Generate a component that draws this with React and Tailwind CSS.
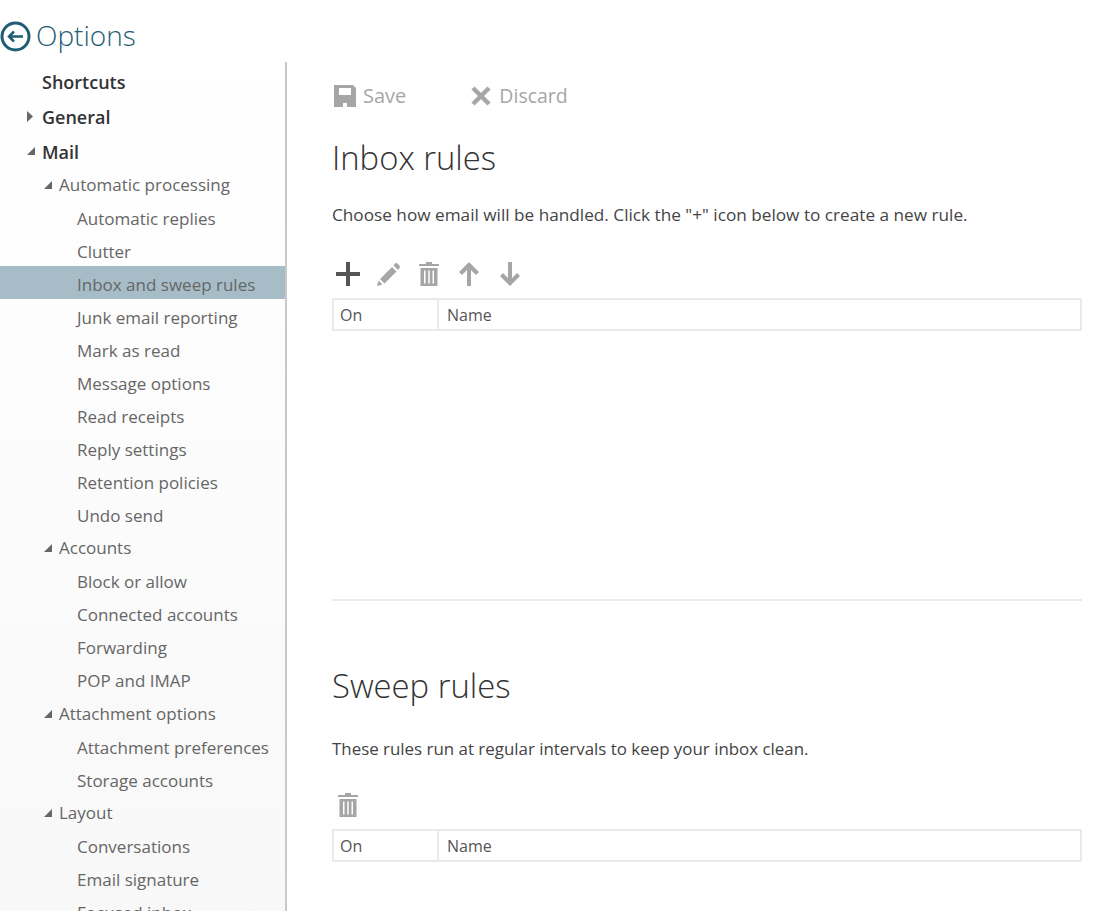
const font = { fontFamily: '"Open Sans", "Noto Sans", sans-serif' };

const menu = [
  { label: "Automatic processing", items: ["Automatic replies", "Clutter", "Inbox and sweep rules", "Junk email reporting", "Mark as read", "Message options", "Read receipts", "Reply settings", "Retention policies", "Undo send"] },
  { label: "Accounts", items: ["Block or allow", "Connected accounts", "Forwarding", "POP and IMAP"] },
  { label: "Attachment options", items: ["Attachment preferences", "Storage accounts"] },
  { label: "Layout", items: ["Conversations", "Email signature", "Focused inbox"] },
];

function Down() {
  return <svg width="8" height="8" viewBox="0 0 8 8" className="shrink-0"><path d="M8 0v8H0z" fill="#666" /></svg>;
}

function Right() {
  return <svg width="6" height="11" viewBox="0 0 6 11" className="shrink-0"><path d="M0 0l6 5.5L0 11z" fill="#666" /></svg>;
}

function TopItem({ icon, label }) {
  return (
    <div className="h-[35px] flex items-center text-[18px] font-semibold text-[#333]">
      <div className="w-[42px] pl-[27px] pt-[3px] flex items-center">{icon}</div>
      <span className="pt-[5px]">{label}</span>
    </div>
  );
}

function Trash() {
  return (
    <svg width="20" height="24" viewBox="0 0 20 24" fill="#a6a6a6">
      <path d="M7 0h6v2h7v2H0V2h7z" />
      <path fillRule="evenodd" d="M1.500 6h17v18h-17zM5 8.500v13h1.500v-13zM9.250 8.500v13h1.500v-13zM13.500 8.500v13h1.500v-13z" />
    </svg>
  );
}

function RuleTable() {
  return (
    <div className="h-[33px] flex border-2 border-[#eaeaea] text-[16px] text-[#555]">
      <div className="w-[105px] pl-[6px] flex items-center border-r-2 border-[#eaeaea]">On</div>
      <div className="flex-1 pl-[8px] flex items-center">Name</div>
    </div>
  );
}

export default function App() {
  return (
    <div className="h-[911px] w-[1114px] overflow-hidden bg-white" style={font}>
      <div className="h-[62px] flex items-center pt-[10px]">
        <svg width="31" height="31" viewBox="0 0 31 31" fill="none" stroke="#1f5d74">
          <circle cx="15.500" cy="15.500" r="13.500" strokeWidth="3" />
          <path d="M23 15.500H9M14 10.500l-5 5 5 5" strokeWidth="2.500" />
        </svg>
        <span className="ml-[5px] -mt-[2px] text-[28px] font-light text-[#1f5d74]">Options</span>
      </div>
      <div className="flex h-[849px]">
        <div className="w-[287px] shrink-0 overflow-hidden border-r-2 border-[#c8c8c8] bg-gradient-to-b from-white to-[#f8f8f8]">
          <TopItem label="Shortcuts" />
          <TopItem label="General" icon={<Right />} />
          <TopItem label="Mail" icon={<Down />} />
          {menu.map((group) => (
            <div key={group.label}>
              <div className={`${group.label === "Attachment options" ? "h-[34px]" : "h-[33px]"} flex items-center pl-[44px] gap-[7px] pt-[3px] text-[17px] text-[#666]`}>
                <Down />
                {group.label}
              </div>
              {group.items.map((item) => (
                <div key={item} className={`h-[33px] flex items-center pl-[77px] pt-[4px] text-[17px] text-[#666] ${item === "Inbox and sweep rules" ? "bg-[#a6bdc7]" : ""}`}>
                  {item}
                </div>
              ))}
            </div>
          ))}
        </div>
        <div className="flex-1 pl-[45px] pr-[32px]">
          <div className="h-[68px] flex items-center text-[20px] text-[#a6a6a6]">
            <svg width="22" height="22" viewBox="0 0 22 22" className="ml-[2px]" fill="#a6a6a6">
              <path fillRule="evenodd" d="M0 0h19l3 3v19H0zM5 3v7h12V3zM9 18v4h4v-4z" />
            </svg>
            <span className="ml-[7px]">Save</span>
            <svg width="20" height="20" viewBox="0 0 20 20" className="ml-[65px]" stroke="#a6a6a6" strokeWidth="4.500">
              <path d="M2 2l16 16M18 2L2 18" />
            </svg>
            <span className="ml-[8px] text-[19.500px]">Discard</span>
          </div>
          <h1 className="mt-[6px] text-[32.800px] leading-[44px] font-light text-[#333]">Inbox rules</h1>
          <p className="mt-[23px] text-[17.200px] leading-[24px] text-[#444]">Choose how email will be handled. Click the "+" icon below to create a new rule.</p>
          <div className="mt-[32px] h-[30px] flex items-center">
            <svg width="24" height="24" viewBox="0 0 24 24" fill="#555" className="ml-[4px]"><path d="M10 0h4v10h10v4H14v10h-4V14H0v-4h10z" /></svg>
            <svg width="24" height="24" viewBox="0 0 24 24" fill="#a6a6a6" className="ml-[17px]"><path d="M18 1.500a2 2 0 0 1 2.500 0l2 2a2 2 0 0 1 0 2.500L21 8l-4.500-4.500zM15 5l4.500 4.500L7.500 21.500 3 17zM1.500 18.500l4 4-5.500 1.500z" /></svg>
            <div className="ml-[18px]"><Trash /></div>
            <svg width="20" height="24" viewBox="0 0 20 24" fill="#a6a6a6" className="ml-[20px]"><path d="M10 0l10 10-3 3-5-5v16H8V8l-5 5-3-3z" /></svg>
            <svg width="20" height="24" viewBox="0 0 20 24" fill="#a6a6a6" className="ml-[21px]"><path d="M10 24L0 14l3-3 5 5V0h4v16l5-5 3 3z" /></svg>
          </div>
          <div className="mt-[9px]"><RuleTable /></div>
          <div className="mt-[268px] h-[2px] bg-[#eaeaea]" />
          <h1 className="mt-[63px] text-[32.800px] leading-[44px] font-light text-[#333]">Sweep rules</h1>
          <p className="mt-[29px] text-[16.900px] leading-[24px] text-[#444]">These rules run at regular intervals to keep your inbox clean.</p>
          <div className="mt-[32px] h-[24px] ml-[6px]"><Trash /></div>
          <div className="mt-[12px]"><RuleTable /></div>
        </div>
      </div>
    </div>
  );
}
